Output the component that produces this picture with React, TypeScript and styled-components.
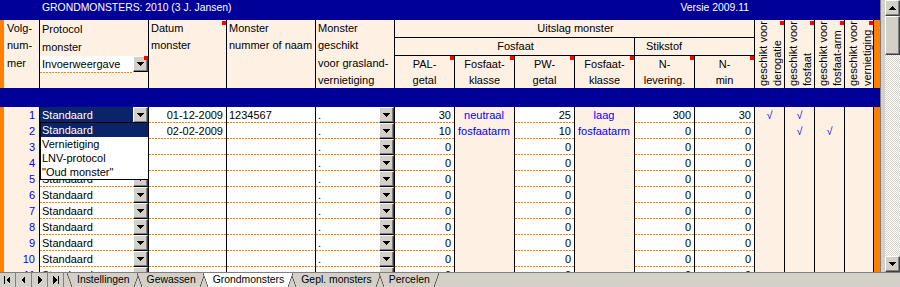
import React from "react";
import styled, { createGlobalStyle, css } from "styled-components";

const NAVY = "#000099";
const PEACH = "#fff0e4";
const ORANGE = "#ff8000";
const SELECT = "#0a246a";
const FACE = "#d4d0c8";
const COLS =
  "4px 36px 109px 78px 89px 79px repeat(6, 60px) repeat(3, 30px) 29px 6px";

const GlobalStyle = createGlobalStyle`
  html, body { margin: 0; padding: 0; background: ${FACE}; }
  body {
    font-family: "Liberation Sans", Arial, sans-serif;
    font-size: 11px;
    color: #000;
  }
  * { box-sizing: border-box; }
`;

type Tone = "white" | "peach";
type Align = "left" | "right" | "center";

interface RowData {
  n: number;
  date?: string;
  nr?: string;
  pal: string;
  pk?: string;
  pw: string;
  wk?: string;
  nl: string;
  nm: string;
  checks: boolean[];
}

const rows: RowData[] = [
  {
    n: 1,
    date: "01-12-2009",
    nr: "1234567",
    pal: "30",
    pk: "neutraal",
    pw: "25",
    wk: "laag",
    nl: "300",
    nm: "30",
    checks: [true, true, false, false],
  },
  {
    n: 2,
    date: "02-02-2009",
    pal: "10",
    pk: "fosfaatarm",
    pw: "10",
    wk: "fosfaatarm",
    nl: "0",
    nm: "0",
    checks: [false, true, true, false],
  },
  ...[3, 4, 5, 6, 7, 8, 9, 10, 11].map((n) => ({
    n,
    pal: "0",
    pw: "0",
    nl: "0",
    nm: "0",
    checks: [false, false, false, false],
  })),
];

const options = ["Standaard", "Vernietiging", "LNV-protocol", '"Oud monster"'];
const tabs = ["Instellingen", "Gewassen", "Grondmonsters", "Gepl. monsters", "Percelen"];

const Window = styled.div`
  width: 900px;
  height: 287px;
  overflow: hidden;
  display: flex;
  flex-direction: column;
  background: ${FACE};
`;

const Main = styled.div`
  display: flex;
  height: 272px;
  flex: none;
`;

const Sheet = styled.div`
  width: 880px;
  display: flex;
  flex-direction: column;
  overflow: hidden;
  background: #fff;
`;

const TitleBar = styled.div`
  height: 20px;
  flex: none;
  display: flex;
  justify-content: space-between;
  padding: 0 131px 0 42px;
  background: ${NAVY};
  color: #fff;
  font-size: 10.4px;
  line-height: 15px;
`;

const HeaderGrid = styled.div`
  display: grid;
  grid-template-columns: ${COLS};
  grid-template-rows: 18px 18px 32px;
  height: 68px;
  flex: none;
  background: ${PEACH};
`;

const Edge = styled.div<{ $col?: number }>`
  background: ${ORANGE};
  ${(p) =>
    p.$col &&
    css`
      grid-column: ${p.$col};
      grid-row: 1 / 4;
    `}
`;

const HCell = styled.div<{
  $col: string;
  $row: string;
  $center?: boolean;
  $underline?: boolean;
  $pad?: number;
  $lh?: number;
}>`
  grid-column: ${(p) => p.$col};
  grid-row: ${(p) => p.$row};
  position: relative;
  overflow: hidden;
  white-space: nowrap;
  border-right: 1px solid #000;
  border-bottom: ${(p) => (p.$underline ? "1px solid #000" : "none")};
  text-align: ${(p) => (p.$center ? "center" : "left")};
  padding-left: ${(p) => p.$pad ?? 2}px;
  line-height: ${(p) => p.$lh ?? 17.3}px;
`;

const HeadLines = styled.div`
  height: 36px;
  padding-left: 2px;
  line-height: 18px;
`;

const InvoerRow = styled.div`
  display: flex;
  height: 17px;
`;

const InvoerText = styled.div`
  flex: 1;
  padding-left: 2px;
  line-height: 16px;
  background-color: #fff;
  background-image: linear-gradient(90deg, ${ORANGE} 2px, transparent 2px);
  background-size: 3px 1px;
  background-repeat: repeat-x;
  background-position: 0 100%;
`;

const Marker = styled.span<{ $top?: number }>`
  position: absolute;
  top: ${(p) => p.$top ?? 1}px;
  right: 0;
  width: 4px;
  height: 4px;
  background: #ff0000;
`;

const VCell = styled.div<{ $col: number }>`
  grid-column: ${(p) => p.$col};
  grid-row: 1 / 4;
  position: relative;
  overflow: hidden;
  border-right: 1px solid #000;
  padding-left: 1px;
`;

const VText = styled.div`
  writing-mode: vertical-rl;
  transform: rotate(180deg);
  height: 68px;
  padding-top: 2px;
  line-height: 14px;
  white-space: nowrap;
`;

const Band = styled.div`
  height: 19px;
  flex: none;
  background: ${NAVY};
`;

const Body = styled.div`
  position: relative;
  flex: 1;
  overflow: hidden;
`;

const Row = styled.div`
  display: grid;
  grid-template-columns: ${COLS};
  height: 16px;
`;

const dotted = css`
  background-image: linear-gradient(90deg, ${ORANGE} 2px, transparent 2px);
  background-size: 3px 1px;
  background-repeat: repeat-x;
  background-position: 0 100%;
`;

const Cell = styled.div<{
  $tone?: Tone;
  $dotted?: boolean;
  $align?: Align;
  $blue?: boolean;
  $padR?: number;
}>`
  position: relative;
  height: 16px;
  line-height: 16px;
  overflow: hidden;
  white-space: nowrap;
  border-right: 1px solid #000;
  padding: 0 ${(p) => p.$padR ?? 3}px 0 2px;
  text-align: ${(p) => p.$align ?? "left"};
  color: ${(p) => (p.$blue ? "#0000ff" : "#000")};
  background-color: ${(p) => (p.$tone === "peach" ? PEACH : "#fff")};
  ${(p) => p.$dotted && dotted}
`;

const ComboCell = styled.div`
  display: flex;
  height: 16px;
  overflow: hidden;
  border-right: 1px solid #000;
  background-color: #fff;
  ${dotted}
`;

const ComboText = styled.div<{ $selected?: boolean }>`
  flex: 1;
  padding-left: 2px;
  line-height: 16px;
  white-space: nowrap;
  overflow: hidden;
  background: ${(p) => (p.$selected ? SELECT : "transparent")};
  color: ${(p) => (p.$selected ? "#fff" : "#000")};
`;

const DropButton = styled.span`
  flex: none;
  width: 15px;
  height: 16px;
  display: flex;
  align-items: center;
  justify-content: center;
  background: ${FACE};
  border: 1px solid;
  border-color: #fff #404040 #000 #fff;
  box-shadow: inset -1px -1px #808080;
`;

const ListBox = styled.div`
  position: absolute;
  left: 40px;
  top: 15px;
  width: 109px;
  border: 1px solid #000;
  background: #fff;
  z-index: 2;
`;

const ListItem = styled.div<{ $active?: boolean }>`
  height: 14px;
  line-height: 14px;
  padding-left: 1px;
  white-space: nowrap;
  background: ${(p) => (p.$active ? SELECT : "#fff")};
  color: ${(p) => (p.$active ? "#fff" : "#000")};
`;

const ScrollCol = styled.div`
  width: 20px;
  display: flex;
  border-left: 1px solid #808080;
  background: ${FACE};
`;

const Gutter = styled.div`
  width: 4px;
`;

const Track = styled.div`
  width: 15px;
  display: flex;
  flex-direction: column;
  background: repeating-conic-gradient(${FACE} 0 25%, #fff 0 50%) 0 0 / 2px 2px;
`;

const bevel = css`
  background: ${FACE};
  border: 1px solid;
  border-color: #fff #404040 #404040 #fff;
  box-shadow: inset -1px -1px #808080;
`;

const ScrollBtn = styled.div`
  height: 16px;
  flex: none;
  display: flex;
  align-items: center;
  justify-content: center;
  ${bevel}
`;

const Thumb = styled.div`
  height: 39px;
  flex: none;
  ${bevel}
`;

const Spacer = styled.div`
  flex: 1;
`;

const TabBar = styled.div`
  height: 15px;
  flex: none;
  display: flex;
  border-top: 1px solid #808080;
  background: ${FACE};
  font-size: 10.4px;
`;

const Nav = styled.div`
  display: flex;
`;

const NavBtn = styled.div`
  width: 16px;
  height: 14px;
  display: flex;
  align-items: center;
  justify-content: center;
  border-right: 1px solid #808080;
`;

const Tabs = styled.div`
  display: flex;
  margin-left: 3px;
`;

const Tab = styled.div<{ $active?: boolean }>`
  position: relative;
  height: 14px;
  line-height: 13px;
  padding: 0 9px 0 10px;
  margin-right: -2px;
  white-space: nowrap;
  z-index: ${(p) => (p.$active ? 1 : 0)};

  &::before {
    content: "";
    position: absolute;
    inset: 0;
    z-index: -1;
    background: ${(p) => (p.$active ? "#fff" : FACE)};
    clip-path: polygon(0 0, 100% 0, calc(100% - 5px) 100%, 5px 100%);
  }

  &::after {
    content: "";
    position: absolute;
    inset: 0;
    pointer-events: none;
    background:
      linear-gradient(to top right, transparent calc(50% - 0.7px), #404040 50%, transparent calc(50% + 0.7px))
        left top / 5px 100% no-repeat,
      linear-gradient(to bottom right, transparent calc(50% - 0.7px), #404040 50%, transparent calc(50% + 0.7px))
        right top / 5px 100% no-repeat;
  }
`;

const Arrow: React.FC<{ up?: boolean }> = ({ up }) => (
  <svg width="7" height="4" viewBox="0 0 7 4" shapeRendering="crispEdges">
    <path d={up ? "M0 4h7L3.5 0z" : "M0 0h7L3.5 4z"} fill="#000" />
  </svg>
);

const NavIcon: React.FC<{ dir: "first" | "prev" | "next" | "last" }> = ({ dir }) => (
  <svg width="7" height="8" viewBox="0 0 7 8" shapeRendering="crispEdges">
    {dir === "first" && (
      <>
        <rect x="0" y="0" width="1" height="8" fill="#000" />
        <path d="M6 0v8L2 4z" fill="#000" />
      </>
    )}
    {dir === "prev" && <path d="M5 0v8L1 4z" fill="#000" />}
    {dir === "next" && <path d="M2 0v8l4-4z" fill="#000" />}
    {dir === "last" && (
      <>
        <path d="M1 0v8l4-4z" fill="#000" />
        <rect x="6" y="0" width="1" height="8" fill="#000" />
      </>
    )}
  </svg>
);

const vertical = [
  ["geschikt voor", "derogatie"],
  ["geschikt voor", "fosfaat"],
  ["geschikt voor", "fosfaat-arm"],
  ["geschikt voor", "vernietiging"],
];

const subHeads: [string, string][] = [
  ["PAL-", "getal"],
  ["Fosfaat-", "klasse"],
  ["PW-", "getal"],
  ["Fosfaat-", "klasse"],
  ["N-", "levering."],
  ["N-", "min"],
];

const Header: React.FC = () => (
  <HeaderGrid>
    <Edge $col={1} />
    <HCell $col="2" $row="1 / 4" $pad={3}>
      Volg-
      <br />
      num-
      <br />
      mer
    </HCell>
    <HCell $col="3" $row="1 / 4" $pad={0}>
      <HeadLines>
        Protocol
        <br />
        monster
      </HeadLines>
      <InvoerRow>
        <InvoerText>Invoerweergave</InvoerText>
        <DropButton>
          <Arrow />
        </DropButton>
      </InvoerRow>
      <Marker $top={36} />
    </HCell>
    <HCell $col="4" $row="1 / 4">
      Datum
      <br />
      monster
      <Marker />
    </HCell>
    <HCell $col="5" $row="1 / 4">
      Monster
      <br />
      nummer of naam
    </HCell>
    <HCell $col="6" $row="1 / 4">
      Monster
      <br />
      geschikt
      <br />
      voor grasland-
      <br />
      vernietiging
    </HCell>
    <HCell $col="7 / 13" $row="1" $center $underline $lh={17}>
      Uitslag monster
    </HCell>
    <HCell $col="7 / 11" $row="2" $center $underline $lh={17}>
      Fosfaat
    </HCell>
    <HCell $col="11 / 13" $row="2" $underline $lh={17} $pad={11}>
      Stikstof
    </HCell>
    {subHeads.map(([a, b], i) => (
      <HCell key={i} $col={String(7 + i)} $row="3" $center $lh={16} $pad={0}>
        {a}
        <br />
        {b}
        <Marker $top={0} />
      </HCell>
    ))}
    {vertical.map(([a, b], i) => (
      <VCell key={i} $col={13 + i}>
        <VText>
          {a}
          <br />
          {b}
        </VText>
        <Marker />
      </VCell>
    ))}
    <Edge $col={17} />
  </HeaderGrid>
);

const DataRow: React.FC<{ r: RowData }> = ({ r }) => (
  <Row>
    <Edge />
    <Cell $tone="peach" $align="right" $blue $padR={4}>
      {r.n}
    </Cell>
    <ComboCell>
      <ComboText $selected={r.n === 1}>Standaard</ComboText>
      <DropButton>
        <Arrow />
      </DropButton>
    </ComboCell>
    <Cell $dotted $align="right">
      {r.date}
    </Cell>
    <Cell $dotted>{r.nr}</Cell>
    <ComboCell>
      <ComboText>.</ComboText>
      <DropButton>
        <Arrow />
      </DropButton>
    </ComboCell>
    <Cell $dotted $align="right">
      {r.pal}
    </Cell>
    <Cell $tone="peach" $align="center" $blue>
      {r.pk}
    </Cell>
    <Cell $dotted $align="right">
      {r.pw}
    </Cell>
    <Cell $tone="peach" $align="center" $blue>
      {r.wk}
    </Cell>
    <Cell $dotted $align="right">
      {r.nl}
    </Cell>
    <Cell $dotted $align="right">
      {r.nm}
    </Cell>
    {r.checks.map((c, i) => (
      <Cell key={i} $tone="peach" $align="center" $blue $padR={2}>
        {c ? "√" : ""}
      </Cell>
    ))}
    <Edge />
  </Row>
);

const App: React.FC = () => (
  <>
    <GlobalStyle />
    <Window>
      <Main>
        <Sheet>
          <TitleBar>
            <span>GRONDMONSTERS: 2010 (3 J. Jansen)</span>
            <span>Versie 2009.11</span>
          </TitleBar>
          <Header />
          <Band />
          <Body>
            {rows.map((r) => (
              <DataRow key={r.n} r={r} />
            ))}
            <ListBox>
              {options.map((o, i) => (
                <ListItem key={o} $active={i === 0}>
                  {o}
                </ListItem>
              ))}
            </ListBox>
          </Body>
        </Sheet>
        <ScrollCol>
          <Gutter />
          <Track>
            <ScrollBtn>
              <Arrow up />
            </ScrollBtn>
            <Thumb />
            <Spacer />
            <ScrollBtn>
              <Arrow />
            </ScrollBtn>
          </Track>
        </ScrollCol>
      </Main>
      <TabBar>
        <Nav>
          <NavBtn>
            <NavIcon dir="first" />
          </NavBtn>
          <NavBtn>
            <NavIcon dir="prev" />
          </NavBtn>
          <NavBtn>
            <NavIcon dir="next" />
          </NavBtn>
          <NavBtn>
            <NavIcon dir="last" />
          </NavBtn>
        </Nav>
        <Tabs>
          {tabs.map((t) => (
            <Tab key={t} $active={t === "Grondmonsters"}>
              {t}
            </Tab>
          ))}
        </Tabs>
      </TabBar>
    </Window>
  </>
);

export default App;
